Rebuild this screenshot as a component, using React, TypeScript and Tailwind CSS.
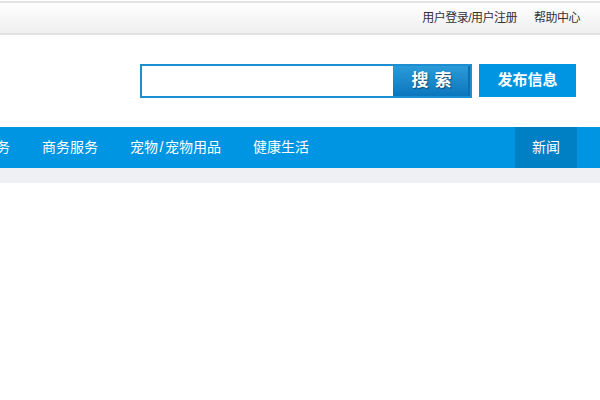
import React from "react";

const navItems = ["生活服务", "商务服务", "宠物/宠物用品", "健康生活"];

const App: React.FC = () => {
  return (
    <div
      className="w-[600px] h-[400px] overflow-hidden bg-white"
      style={{ fontFamily: '"Liberation Sans", "Noto Sans CJK SC", sans-serif' }}
    >
      {/* Top bar */}
      <div className="mt-px h-[34px] border-t-2 border-b-2 border-[#e2e2e2] bg-gradient-to-b from-white to-[#efefef] flex items-center justify-end pr-[20px] text-[12px] text-[#333] tracking-[-0.5px]">
        <span>用户登录/用户注册</span>
        <span className="ml-[17px]">帮助中心</span>
      </div>

      {/* Header with search */}
      <div className="h-[92px] flex items-start justify-end pr-[24px] pt-[29px]">
        <div className="flex w-[332px] h-[34px] border-2 border-[#1b8fd2] bg-white">
          <input className="flex-1 min-w-0 outline-none px-2 text-[13px]" />
          <button className="w-[77px] h-full bg-gradient-to-b from-[#2a9bd8] to-[#0a76bd] border-r-2 border-[#0f6fae] text-white text-[17px] font-bold tracking-[6px] pl-[8px] [text-shadow:1px_1px_1px_rgba(0,0,0,0.45)]">
            搜索
          </button>
        </div>
        <button className="ml-[7px] w-[97px] h-[33px] bg-[#0095e3] text-white text-[15px] font-bold">
          发布信息
        </button>
      </div>

      {/* Nav */}
      <div className="h-[41px] bg-[#0095e3] flex items-stretch pr-[23px] text-white text-[14px]">
        <div className="flex items-center ml-[-62px]">
          {navItems.map((item) => {
            const parts = item.split("/");
            return (
              <span key={item} className="px-4 whitespace-nowrap">
                {parts.length > 1 ? (
                  <>
                    {parts[0]}
                    <span className="mx-[1.5px]">/</span>
                    {parts[1]}
                  </>
                ) : (
                  item
                )}
              </span>
            );
          })}
        </div>
        <div className="flex-1" />
        <div className="w-[62px] bg-[#0080c4] flex items-center justify-center">新闻</div>
      </div>
      <div className="h-[15px] bg-[#eff0f4]" />
    </div>
  );
};

export default App;
